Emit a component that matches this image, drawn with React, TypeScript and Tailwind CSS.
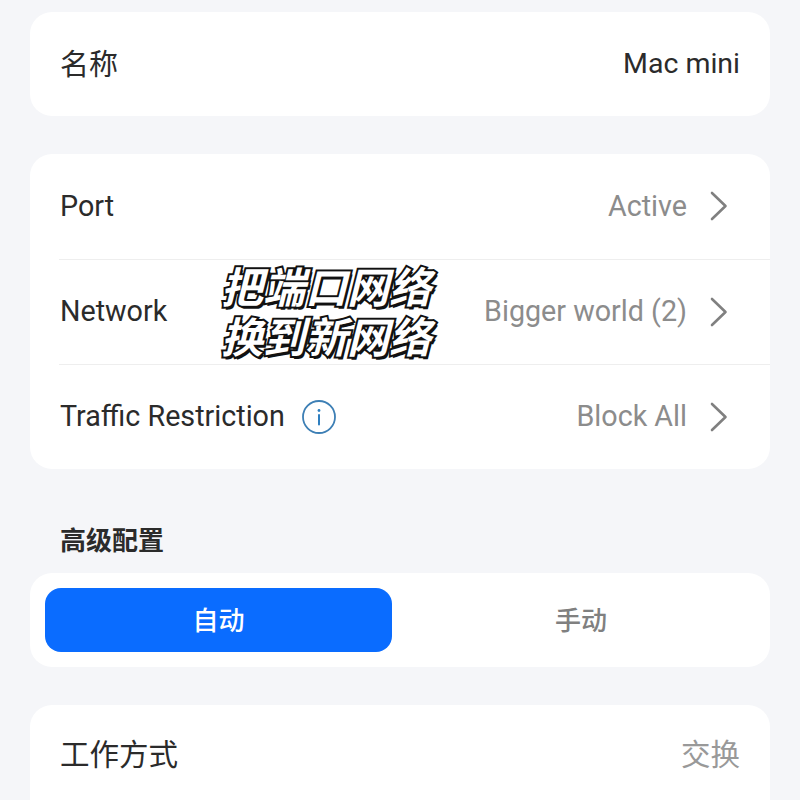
const font = "font-['Roboto','Noto_Sans_CJK_SC',sans-serif]";

const Chevron = () => (
  <svg width="20" height="32" viewBox="0 0 20 32" fill="none" className="ml-[22px] mr-[2px]">
    <path d="M3 3 L16.5 16 L3 29" stroke="#808080" strokeWidth="2.6" strokeLinecap="round" strokeLinejoin="round" />
  </svg>
);

const InfoIcon = () => (
  <svg width="36" height="36" viewBox="0 0 36 36" fill="none" className="ml-[16px]">
    <circle cx="18" cy="18" r="16" stroke="#3d7fb5" strokeWidth="1.8" />
    <circle cx="18" cy="11.5" r="1.4" fill="#2f7fc0" />
    <path d="M18 16 V25.5" stroke="#2f7fc0" strokeWidth="2" strokeLinecap="round" />
  </svg>
);

const rows = [
  { label: "Port", value: "Active" },
  { label: "Network", value: "Bigger world (2)" },
  { label: "Traffic Restriction", value: "Block All", info: true },
];

export default function App() {
  return (
    <div className={`relative w-[800px] h-[800px] overflow-hidden bg-[#f5f6f9] pt-[12px] px-[30px] ${font}`}>
      <div className="flex h-[104px] items-center justify-between rounded-[22px] bg-white px-[30px] text-[29px] text-[#2b2b2b]">
        <span className="pt-[3px]">名称</span>
        <span className="pt-[1px] text-[28.5px]">Mac mini</span>
      </div>

      <div className="mt-[38px] rounded-[22px] bg-white">
        {rows.map((row, i) => (
          <div key={row.label} className={`ml-[29px] flex h-[105px] items-center justify-between pl-[1px] pr-[39px] ${i > 0 ? "border-t border-[#eeeeee]" : ""}`}>
            <span className="flex items-center text-[28.7px] text-[#2b2b2b]">
              {row.label}
              {row.info && <InfoIcon />}
            </span>
            <span className="flex items-center text-[28.7px] text-[#8c8c8c]">
              {row.value}
              <Chevron />
            </span>
          </div>
        ))}
      </div>

      <div className="mt-[53px] pl-[30px] text-[26px] leading-[38px] font-bold text-[#2b2b2b]">高级配置</div>

      <div className="mt-[13px] flex h-[94px] items-center rounded-[22px] bg-white px-[15px]">
        <div className="flex h-[64px] w-[347px] items-center justify-center rounded-[16px] bg-[#0a6cff] pt-[2px] text-[26px] font-medium text-white">自动</div>
        <div className="flex flex-1 items-center justify-center pl-[15px] pt-[2px] text-[26px] font-medium text-[#808080]">手动</div>
      </div>

      <div className="mt-[38px] flex h-[110px] items-start justify-between rounded-t-[22px] bg-white px-[30px] pt-[28px] text-[29.5px]">
        <span className="text-[#2b2b2b]">工作方式</span>
        <span className="text-[#999999]">交换</span>
      </div>

      {/* sticker caption over the list */}
      <div className="absolute left-[221px] top-[264px] text-[42px] leading-[50px] font-bold text-white italic [-webkit-text-stroke:4px_#111111] [paint-order:stroke_fill] [text-shadow:2px_3px_0_#111111]">
        <div>把端口网络</div>
        <div>换到新网络</div>
      </div>
    </div>
  );
}
